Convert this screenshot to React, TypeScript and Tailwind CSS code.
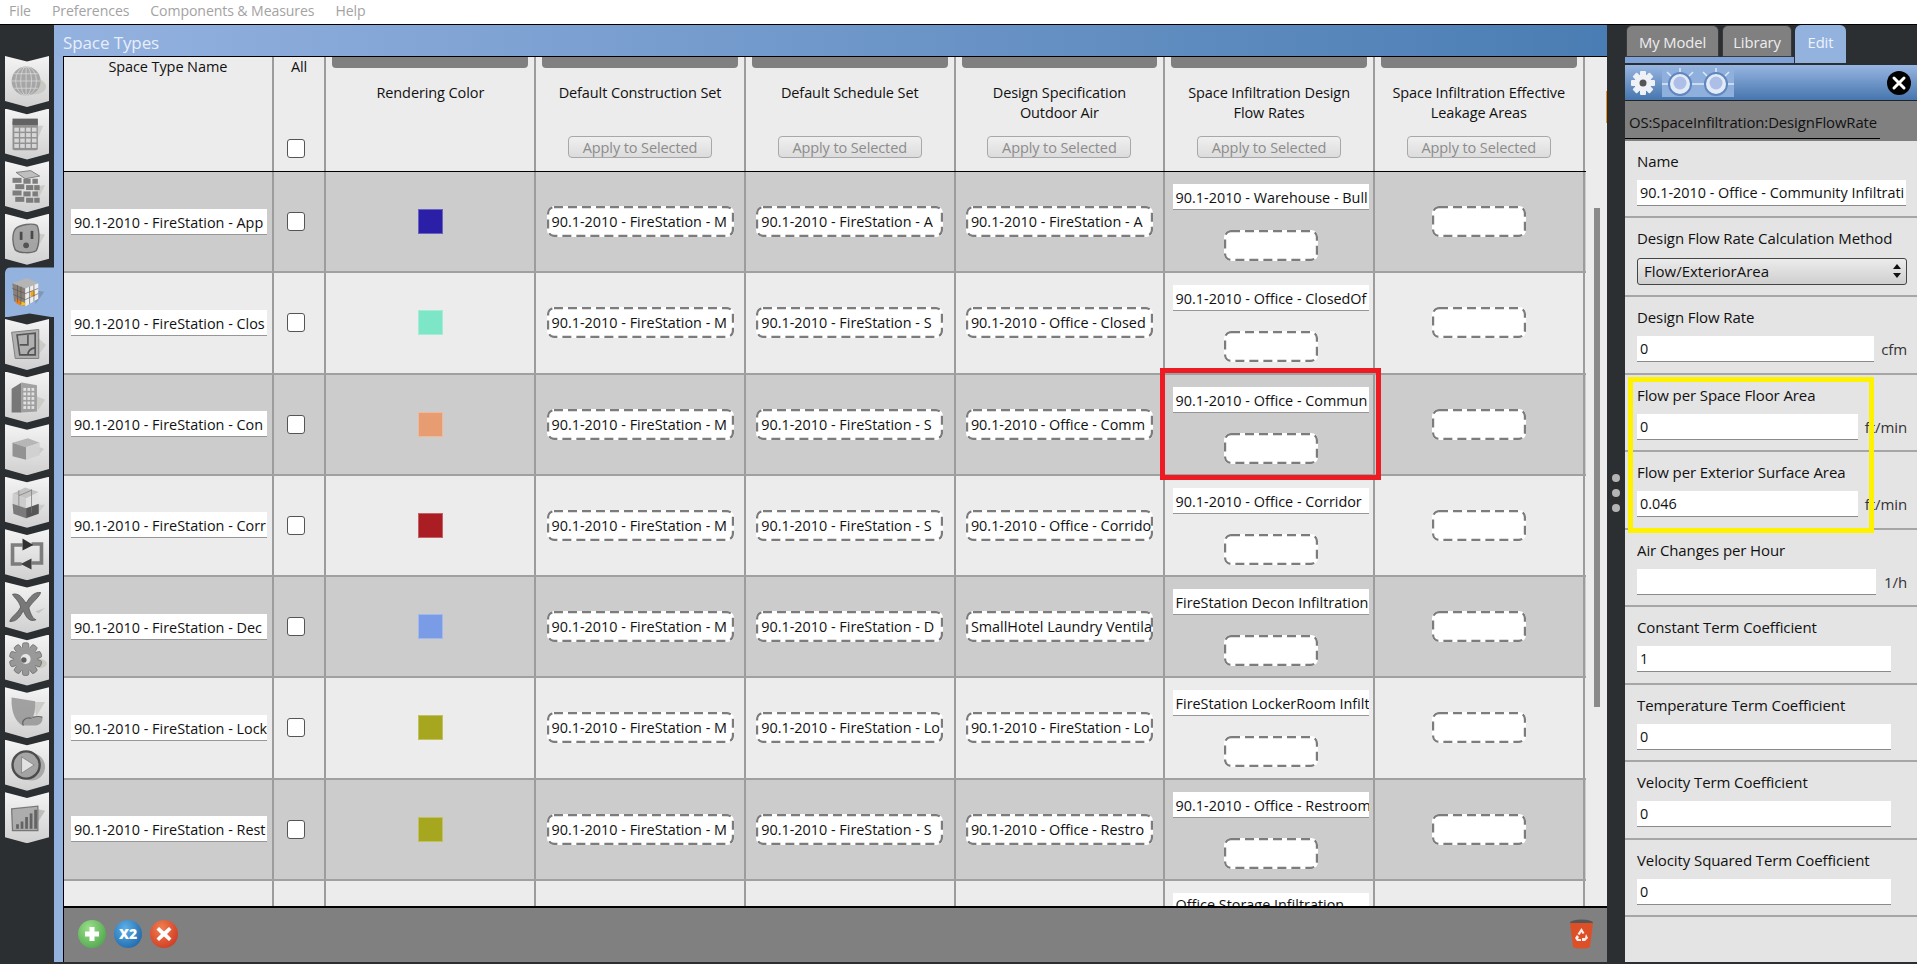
const rows = [
  { name: '90.1-2010 - FireStation - App', color: 'bg-[#2a1fa6]', sched: '90.1-2010 - FireStation - A', air: '90.1-2010 - FireStation - A', infil: '90.1-2010 - Warehouse - Bull' },
  { name: '90.1-2010 - FireStation - Clos', color: 'bg-[#7ce6c6]', sched: '90.1-2010 - FireStation - S', air: '90.1-2010 - Office - Closed', infil: '90.1-2010 - Office - ClosedOf' },
  { name: '90.1-2010 - FireStation - Con', color: 'bg-[#e89c72]', sched: '90.1-2010 - FireStation - S', air: '90.1-2010 - Office - Comm', infil: '90.1-2010 - Office - Commun' },
  { name: '90.1-2010 - FireStation - Corr', color: 'bg-[#aa1d22]', sched: '90.1-2010 - FireStation - S', air: '90.1-2010 - Office - Corrido', infil: '90.1-2010 - Office - Corridor' },
  { name: '90.1-2010 - FireStation - Dec', color: 'bg-[#7a9be6]', sched: '90.1-2010 - FireStation - D', air: 'SmallHotel Laundry Ventila', infil: 'FireStation Decon Infiltration' },
  { name: '90.1-2010 - FireStation - Lock', color: 'bg-[#a6a61f]', sched: '90.1-2010 - FireStation - Lo', air: '90.1-2010 - FireStation - Lo', infil: 'FireStation LockerRoom Infilt' },
  { name: '90.1-2010 - FireStation - Rest', color: 'bg-[#a6a61f]', sched: '90.1-2010 - FireStation - S', air: '90.1-2010 - Office - Restro', infil: '90.1-2010 - Office - Restroom' },
];

const headers = [
  'Rendering Color',
  'Default Construction Set',
  'Default Schedule Set',
  'Design Specification Outdoor Air',
  'Space Infiltration Design Flow Rates',
  'Space Infiltration Effective Leakage Areas',
];

function Globe() {
  return (
    <svg viewBox="0 0 44 42" className="h-full w-full">
      <ellipse cx="29" cy="27" rx="14" ry="9" fill="#c4c6c0" />
      <circle cx="21" cy="21" r="16" fill="#9c9c9c" />
      <g fill="none" stroke="#d0d0d0" strokeWidth="1">
        <ellipse cx="21" cy="21" rx="6" ry="16" />
        <ellipse cx="21" cy="21" rx="11.5" ry="16" />
        <path d="M21 5v32M5 21h32M8 13h26M8 29h26" />
      </g>
    </svg>
  );
}

function Calendar() {
  return (
    <svg viewBox="0 0 44 42" className="h-full w-full">
      <path d="M30 12l10 0-8 18z" fill="#c8c8c4" />
      <rect x="6" y="6" width="28" height="33" rx="2" fill="#858585" />
      <rect x="6" y="4" width="28" height="7" fill="#4c4c4c" />
      <g fill="#d6d6d6">
        {[14, 20, 26, 32].map((y) =>
          [8, 14.5, 21, 27.5].map((x) => <rect key={`${x}-${y}`} x={x} y={y} width="5" height="4.4" />),
        )}
      </g>
    </svg>
  );
}

function Bricks() {
  return (
    <svg viewBox="0 0 44 42" className="h-full w-full">
      <path d="M30 22l12-2-8 16z" fill="#c8c8c4" />
      <path d="M10 6l16-2 10 6-16 3z" fill="#b8b8b8" stroke="#666" strokeWidth="1" />
      {[12, 19, 26, 33].map((y, i) => (
        <g key={y} fill="#6c6c6c">
          <rect x={6 + (i % 2) * 3} y={y} width="10" height="5.5" />
          <rect x={18 + (i % 2) * 3} y={y + 1} width="8" height="5.5" />
          <rect x={28 + (i % 2) * 2} y={y + 1} width="6" height="5.5" />
        </g>
      ))}
    </svg>
  );
}

function Outlet() {
  return (
    <svg viewBox="0 0 44 42" className="h-full w-full">
      <path d="M30 14l12 2-10 18z" fill="#c8c8c4" />
      <path d="M9 10c5-5 19-7 24-4 3 5 3 22-1 28-5 3-18 3-23-1-3-6-4-17 0-23z" fill="#9a9a9a" stroke="#555" strokeWidth="1.5" />
      <rect x="14" y="13" width="3" height="9" fill="#2e2e2e" />
      <rect x="26" y="12" width="3" height="9" fill="#2e2e2e" />
      <circle cx="21" cy="28" r="3.2" fill="#3a3a3a" />
    </svg>
  );
}

function ColorCube() {
  return (
    <svg viewBox="0 0 44 42" className="h-full w-full">
      <path d="M30 20l12 2-10 14z" fill="#7f96ba" />
      <path d="M5 12l17-6 13 6-15 6z" fill="#b5b5b5" />
      <path d="M5 12l15 6v21L7 33z" fill="#8a8078" />
      <path d="M20 18l15-6v18l-15 9z" fill="#eeeeee" />
      <rect x="26" y="21" width="5" height="6" fill="#f2a51f" />
      <path d="M9 30l6 3v5l-6-3z" fill="#ee7c1a" />
      <path d="M15 33l5 2v3l-5-1z" fill="#f2c21f" />
      <path d="M20 24l15-6M20 31l15-7M25 16v20M30 14v19M5 18l15 6M6 25l14 6M11 14v20M15 16v20" stroke="#555" strokeWidth="0.7" />
    </svg>
  );
}

function FloorPlan() {
  return (
    <svg viewBox="0 0 44 42" className="h-full w-full">
      <path d="M34 14l9 8-9 12z" fill="#c8c8c4" />
      <path d="M5 8l30-3v32H9z" fill="#a8a8a8" stroke="#666" strokeWidth="1" />
      <path d="M11 11l20-2v24H14zM14 22h9V11M23 33c0-5 3-7 8-8" fill="none" stroke="#3c3c3c" strokeWidth="1.8" />
    </svg>
  );
}

function Building() {
  return (
    <svg viewBox="0 0 44 42" className="h-full w-full">
      <path d="M32 20l10 4-8 12z" fill="#c8c8c4" />
      <path d="M5 38V12l11-7v33z" fill="#666" />
      <path d="M16 5l17 3v29l-17 1z" fill="#959595" />
      <g fill="#e2e2e2">
        {[11, 16, 21, 26, 31].map((y) =>
          [18, 22.5, 27].map((x) => <rect key={`${x}-${y}`} x={x} y={y} width="3" height="3.2" />),
        )}
      </g>
    </svg>
  );
}

function Box() {
  return (
    <svg viewBox="0 0 44 42" className="h-full w-full">
      <path d="M33 18l8 3-8 8z" fill="#c8c8c4" />
      <path d="M6 14l17-5 13 5-15 5z" fill="#aeaeae" />
      <path d="M6 14l15 5v14L6 29z" fill="#858585" />
      <path d="M21 19l15-5v14l-15 5z" fill="#cfcfcf" />
    </svg>
  );
}

function BlockStack() {
  return (
    <svg viewBox="0 0 44 42" className="h-full w-full">
      <path d="M32 24l10 0-10 12z" fill="#c8c8c4" />
      <path d="M6 12l14-7 15 5-14 7z" fill="#bdbdbd" />
      <path d="M6 12l15 5v11L6 23z" fill="#c9c9c9" />
      <path d="M21 17l14-7v13l-14 5z" fill="#e2e2e2" />
      <path d="M6 23l15 5v11L7 34z" fill="#6a6a6a" />
      <path d="M21 28l14-5v11l-14 5z" fill="#3f3f3f" />
      <path d="M13 8v24M13 14l14-6M27 7v26" stroke="#666" strokeWidth="0.8" fill="none" />
    </svg>
  );
}

function Arrows() {
  return (
    <svg viewBox="0 0 44 42" className="h-full w-full">
      <path d="M17 11H6v21h10M27 31h11V10H27" fill="none" stroke="#6c6c6c" strokeWidth="4" />
      <path d="M17 4l12 7-12 6z" fill="#111" />
      <path d="M27 26l-12 6 12 6z" fill="#222" />
    </svg>
  );
}

function CrossTool() {
  return (
    <svg viewBox="0 0 44 42" className="h-full w-full">
      <path d="M6 7c7-2 11 4 15 10 4-7 9-13 16-12-1 5-10 11-13 17 2 7 5 13 8 13-7 3-11-2-14-10-4 7-7 12-15 12 1-5 9-9 12-16-2-7-7-10-9-14z" fill="#666" stroke="#444" strokeWidth="1" />
      <path d="M31 26l11-4-7 6z" fill="#c0c0bc" />
    </svg>
  );
}

function Gear() {
  const teeth = [0, 36, 72, 108, 144, 180, 216, 252, 288, 324];
  return (
    <svg viewBox="0 0 44 42" className="h-full w-full">
      <ellipse cx="36" cy="25" rx="8" ry="5" fill="#c4c8bc" />
      <g fill="#8c8c8c" stroke="#555" strokeWidth="0.8">
        {teeth.map((a) => (
          <rect key={a} x="17" y="2" width="7" height="9" rx="2" transform={`rotate(${a} 20.5 20)`} />
        ))}
      </g>
      <circle cx="20.5" cy="20" r="13" fill="#8c8c8c" />
      <circle cx="20.5" cy="20" r="5.5" fill="#e8e8e8" />
      <circle cx="18.5" cy="21" r="3" fill="#4a4a4a" />
    </svg>
  );
}

function Scroll() {
  return (
    <svg viewBox="0 0 44 42" className="h-full w-full">
      <path d="M30 10l12 0-10 16z" fill="#c8c8c4" />
      <path d="M5 5l26 4c0 7 0 14-3 18l11 0c1 5-3 9-9 9H17C10 32 4 22 5 5z" fill="#959595" />
      <path d="M18 36c-3-6 4-10 9-8M28 27c4-1 9-1 11 0" fill="none" stroke="#505050" strokeWidth="1.4" />
    </svg>
  );
}

function PlayIcon() {
  return (
    <svg viewBox="0 0 44 42" className="h-full w-full">
      <circle cx="27" cy="23" r="15" fill="#a0a09e" />
      <circle cx="21" cy="21" r="15" fill="#9a9a9a" stroke="#333" strokeWidth="2.6" />
      <path d="M16 12l14 9-14 9z" fill="#e2e2e2" stroke="#777" strokeWidth="1" />
    </svg>
  );
}

function ChartIcon() {
  return (
    <svg viewBox="0 0 44 42" className="h-full w-full">
      <path d="M32 12l10 2-10 16z" fill="#b8b8b4" />
      <path d="M5 12l29-3v27H6z" fill="#a4a4a4" stroke="#666" strokeWidth="1.4" />
      <g fill="#4e4e4e">
        <rect x="10" y="29" width="3" height="5" />
        <rect x="15" y="26" width="3" height="8" />
        <rect x="20" y="21" width="3" height="13" />
        <rect x="25" y="17" width="3" height="17" />
        <rect x="30" y="13" width="3" height="21" />
      </g>
    </svg>
  );
}

const sideIcons = [Globe, Calendar, Bricks, Outlet, ColorCube, FloorPlan, Building, Box, BlockStack, Arrows, CrossTool, Gear, Scroll, PlayIcon, ChartIcon];

function Sidebar() {
  return (
    <div className="flex w-[54px] flex-none flex-col pt-[31px]">
      {sideIcons.map((Icon, i) =>
        i === 4 ? (
          <div key={i} className="ml-[5px] h-[52.6px] w-[49px] flex-none pt-[1px]">
            <div className="h-[50px] rounded-tl-[6px] bg-[#94b2de] pl-[3px] pr-[8px] pt-[5px] [clip-path:polygon(0_0,100%_0,100%_100%,50%_92%,0_100%)]">
              <div className="h-[38px]"><Icon /></div>
            </div>
          </div>
        ) : (
          <div key={i} className="ml-[5px] h-[52.6px] w-[44px] flex-none">
            <div className="h-[51px] bg-linear-to-b from-[#f4f4f4] to-[#d0d0d0] px-[1px] pt-[6px] [clip-path:polygon(0_0,50%_11%,100%_0,100%_88%,50%_100%,0_88%)]">
              <div className="h-[38px] opacity-85"><Icon /></div>
            </div>
          </div>
        ),
      )}
    </div>
  );
}

function NameInput({ value }: { value: string }) {
  return (
    <div className="h-[26px] w-[196px] overflow-hidden whitespace-nowrap border-b-[1.5px] border-[#969696] bg-white pl-[3px] pr-[1px] text-[14.4px] leading-[27px] tracking-[0px]">
      {value}
    </div>
  );
}

function DropBox({ value, wide = true }: { value?: string; wide?: boolean }) {
  return (
    <div className={`relative h-[31px] ${wide ? 'w-[187px]' : 'w-[94px]'} overflow-hidden whitespace-nowrap rounded-[7px] bg-white px-[5px] text-[14.4px] leading-[32px] tracking-[0px]`}>
      {value}
      <svg className="absolute inset-0 h-full w-full">
        <rect x="1" y="1" width={wide ? 185 : 92} height="29" rx="6" fill="none" stroke="#7c7c7c" strokeWidth="2.4" strokeDasharray="9 5" />
      </svg>
    </div>
  );
}

function CheckBox() {
  return <input type="checkbox" className="h-[19px] w-[18px] appearance-none rounded-[3px] border-[1.5px] border-[#555] bg-white" />;
}

function HeaderRow() {
  return (
    <div className="flex h-[115px] flex-none border-b border-black bg-[#ececec]">
      <div className="w-[209.7px] flex-none border-r-2 border-[#9c9c9c] text-center leading-[20px]">Space Type Name</div>
      <div className="flex w-[52.8px] flex-none flex-col border-r-2 border-[#9c9c9c] text-center leading-[20px]">
        All
        <div className="mt-auto mb-[13px] ml-[13px] flex"><CheckBox /></div>
      </div>
      {headers.map((h, i) => (
        <div key={h} className="flex w-[209.7px] flex-none flex-col items-center border-r-2 border-[#9c9c9c] px-[6px]">
          <div className="h-[11px] w-full flex-none rounded-b-[4px] bg-[#808080]" />
          <div className="mt-[15px] w-[190px] text-center leading-[20px]">{h}</div>
          {i > 0 && (
            <button className="mt-auto mb-[13px] h-[22px] w-[144px] rounded-[4px] border border-[#a8a8a8] bg-linear-to-b from-[#f0f0f0] to-[#dcdcdc] leading-[19px] text-[#8c8c8c]">
              Apply to Selected
            </button>
          )}
        </div>
      ))}
    </div>
  );
}

function Row({ r, alt }: { r: (typeof rows)[number]; alt: boolean }) {
  return (
    <div className={`flex h-[101.25px] flex-none border-b-2 border-[#a0a0a0] ${alt ? 'bg-[#ececec]' : 'bg-[#cccccc]'}`}>
      <div className="flex w-[209.7px] flex-none items-center border-r-2 border-[#9c9c9c] pl-[7px]">
        <NameInput value={r.name} />
      </div>
      <div className="flex w-[52.8px] flex-none items-center border-r-2 border-[#9c9c9c] pl-[13px]">
        <CheckBox />
      </div>
      <div className="flex w-[209.7px] flex-none items-center justify-center border-r-2 border-[#9c9c9c]">
        <div className={`h-[25px] w-[25px] border border-white/30 ${r.color}`} />
      </div>
      <div className="flex w-[209.7px] flex-none items-center justify-center border-r-2 border-[#9c9c9c]">
        <DropBox value="90.1-2010 - FireStation - M" />
      </div>
      <div className="flex w-[209.7px] flex-none items-center justify-center border-r-2 border-[#9c9c9c]">
        <DropBox value={r.sched} />
      </div>
      <div className="flex w-[209.7px] flex-none items-center justify-center border-r-2 border-[#9c9c9c]">
        <DropBox value={r.air} />
      </div>
      <div className="flex w-[209.7px] flex-none flex-col items-center gap-[20px] border-r-2 border-[#9c9c9c] pl-[3px] pt-[12px]">
        <NameInput value={r.infil} />
        <DropBox wide={false} />
      </div>
      <div className="flex w-[209.7px] flex-none items-center justify-center border-r-2 border-[#9c9c9c]">
        <DropBox wide={false} />
      </div>
    </div>
  );
}

function LastRow() {
  return (
    <div className="flex h-[27px] flex-none overflow-hidden bg-[#ececec]">
      <div className="w-[209.7px] flex-none border-r-2 border-[#9c9c9c]" />
      <div className="w-[52.8px] flex-none border-r-2 border-[#9c9c9c]" />
      <div className="w-[209.7px] flex-none border-r-2 border-[#9c9c9c]" />
      <div className="w-[209.7px] flex-none border-r-2 border-[#9c9c9c]" />
      <div className="w-[209.7px] flex-none border-r-2 border-[#9c9c9c]" />
      <div className="w-[209.7px] flex-none border-r-2 border-[#9c9c9c]" />
      <div className="flex w-[209.7px] flex-none flex-col items-center border-r-2 border-[#9c9c9c] pl-[3px] pt-[12px]">
        <div className="h-[15px] w-[196px] overflow-hidden whitespace-nowrap bg-white pl-[3px] text-[14.4px] leading-[24px] tracking-[0px]">Office Storage Infiltration</div>
      </div>
      <div className="w-[209.7px] flex-none border-r-2 border-[#9c9c9c]" />
    </div>
  );
}

function RoundButton({ tone, children }: { tone: string; children: React.ReactNode }) {
  return (
    <div className={`flex h-[28px] w-[28px] items-center justify-center rounded-full bg-radial-[at_40%_30%] ${tone}`}>
      {children}
    </div>
  );
}

function Trash() {
  return (
    <svg viewBox="0 0 25 30" className="h-[30px] w-[25px]">
      <ellipse cx="12.5" cy="3.5" rx="11.5" ry="3" fill="#555" />
      <path d="M1 4h23l-3 24c-3 2-14 2-17 0z" fill="#dd5027" />
      <path d="M12.5 9l3 5-2 1-1-2-2 3-2-1zM17 15l2 4-3 3h-3v-3l3 0zM8 16l2 2-1 2h3v2H8l-2-3z" fill="#ffffff" opacity="0.9" />
    </svg>
  );
}

function CenterPane() {
  return (
    <div className="flex w-[1553px] flex-none flex-col bg-[#94b2de]">
      <div className="h-[31px] flex-none bg-linear-to-r from-[#94b2e0] to-[#4a7db3] pl-[9px] pt-[6px] text-[17px] leading-[24px] text-[#e8eef8]">
        Space Types
      </div>
      <div className="ml-[9px] flex min-h-0 flex-1 flex-col border-t border-l border-black">
        <div className="flex min-h-0 flex-1">
          <div className="flex w-[1521.5px] flex-none flex-col overflow-hidden">
            <HeaderRow />
            {rows.map((r, i) => (
              <Row key={r.name} r={r} alt={i % 2 === 1} />
            ))}
            <LastRow />
          </div>
          <div className="flex-1 bg-[#ececec] pl-[8px] pt-[151px]">
            <div className="h-[499px] w-[6px] bg-[#8a8a8a]" />
          </div>
          <div className="w-px flex-none bg-[#ececec]">
            <div className="mt-[34px] h-[32px] bg-[#f0961e]" />
          </div>
        </div>
        <div className="flex h-[56px] flex-none items-center gap-[8px] border-t-2 border-black bg-[#808080] pb-[2px] pl-[14px] pr-[13px]">
          <RoundButton tone="from-[#9be08a] to-[#3f9a3f]">
            <svg viewBox="0 0 20 20" className="h-[20px] w-[20px]"><path d="M7.5 3h5v4.5H17v5h-4.5V17h-5v-4.5H3v-5h4.5z" fill="#fff" /></svg>
          </RoundButton>
          <RoundButton tone="from-[#5cb0e8] to-[#12589c]">
            <span className="text-[14px] font-extrabold leading-none text-white">X2</span>
          </RoundButton>
          <RoundButton tone="from-[#f08050] to-[#c82a18]">
            <svg viewBox="0 0 20 20" className="h-[20px] w-[20px]"><path d="M5 3l5 4.5L15 3l2.5 2.5L13 10l4.5 4.5L15 17l-5-4.5L5 17l-2.5-2.5L7 10 2.5 5.5z" fill="#fff" /></svg>
          </RoundButton>
          <div className="ml-auto"><Trash /></div>
        </div>
      </div>
    </div>
  );
}

function Splitter() {
  return (
    <div className="flex w-[18px] flex-none flex-col items-center gap-[7px] pr-[1px] pt-[449px]">
      <div className="h-[8px] w-[8px] rounded-full bg-[#b4b4b4]" />
      <div className="h-[8px] w-[8px] rounded-full bg-[#b4b4b4]" />
      <div className="h-[8px] w-[8px] rounded-full bg-[#b4b4b4]" />
    </div>
  );
}

function Section({ label, value, inputW, unit, h = 'h-[77.5px]' }: { label: string; value: string; inputW: string; unit?: string; h?: string }) {
  return (
    <div className={`${h} flex-none border-b-2 border-[#a6a6a6] pl-[12px] pt-[10px]`}>
      <div className="h-[20px] text-[15px] leading-[20px]">{label}</div>
      <div className="mt-[9px] flex">
        <div className={`h-[26px] ${inputW} flex-none overflow-hidden whitespace-nowrap border-b-[1.5px] border-[#8a8a8a] bg-white pl-[3px] text-[14.4px] leading-[26px] tracking-[0px]`}>{value}</div>
        {unit && <span className="ml-auto pr-[10px] text-[15px] leading-[26px] text-[#333]">{unit}</span>}
      </div>
    </div>
  );
}

function Sun() {
  return (
    <svg viewBox="0 0 36 30" className="h-[30px] w-[36px]">
      <path d="M18 0v6M5 4l5 5M31 4l-5 5M0 16h6M30 16h6" stroke="#dfe8f6" strokeWidth="1.5" />
      <circle cx="18" cy="16" r="11" fill="#e4ebf8" stroke="#5f86bd" strokeWidth="2" />
      <circle cx="18" cy="15" r="6.5" fill="#adbfe6" />
    </svg>
  );
}

function RightPanel() {
  return (
    <div className="flex w-[292px] flex-none flex-col">
      <div className="relative flex h-[38px] flex-none items-start gap-[3px] pl-[1px] text-[14.8px] leading-[32px]">
        <div className="h-[32px] w-[93px] rounded-t-[6px] border border-[#3a3a3a] bg-[#808080] text-center text-[#eeeeee]">My Model</div>
        <div className="h-[32px] w-[70px] rounded-t-[6px] border border-[#3a3a3a] bg-[#808080] text-center text-[#eeeeee]">Library</div>
        <div className="h-[38px] w-[51px] rounded-t-[6px] bg-[#94b2de] pt-[1px] text-center text-[#eef3fb]">Edit</div>
        <div className="absolute bottom-0 left-0 h-[6px] w-[169px] bg-[#7fa2d8]" />
      </div>
      <div className="mt-[2px] flex h-[36px] flex-none items-center border-b border-[#20242a] bg-linear-to-b from-[#98b6e2] to-[#4676ad] pl-[5px] pr-[6px]">
        <svg viewBox="0 0 26 26" className="h-[26px] w-[26px]">
          <g fill="#eef1f6">
            {[0, 45, 90, 135].map((a) => (
              <rect key={a} x="10" y="1" width="6" height="24" rx="1" transform={`rotate(${a} 13 13)`} />
            ))}
          </g>
          <circle cx="13" cy="13" r="8.5" fill="#eef1f6" />
          <circle cx="13" cy="13" r="3.5" fill="#555" />
        </svg>
        <div className="ml-[6px] flex h-[28px] w-[72px] items-center bg-[#8fb0dd]">
          <Sun />
          <Sun />
        </div>
        <div className="ml-auto flex h-[24px] w-[24px] items-center justify-center rounded-full bg-black">
          <svg viewBox="0 0 16 16" className="h-[16px] w-[16px]"><path d="M3 3l10 10M13 3L3 13" stroke="#fff" strokeWidth="3" strokeLinecap="round" /></svg>
        </div>
      </div>
      <div className="h-[40px] flex-none bg-[#808080]">
        <div className="h-[38px] w-[255px] whitespace-nowrap border-b border-black pl-[4px] pt-[10px] text-[14.9px] leading-[22px] text-[#111]">OS:SpaceInfiltration:DesignFlowRate</div>
      </div>
      <div className="flex min-h-0 flex-1 flex-col bg-[#e4e4e4]">
        <Section label="Name" value="90.1-2010 - Office - Community Infiltrati" inputW="w-[269px]" h="h-[76.5px]" />
        <div className="h-[79.5px] flex-none border-b-2 border-[#a6a6a6] pl-[12px] pt-[10px]">
          <div className="h-[20px] text-[15px] leading-[20px]">Design Flow Rate Calculation Method</div>
          <div className="mt-[10px] flex h-[27px] w-[270px] items-center justify-between rounded-[3px] border border-[#444] bg-linear-to-b from-[#ececec] to-[#cfcfcf] pl-[6px] pr-[4px] text-[15px] tracking-[0px]">
            <span>Flow/ExteriorArea</span>
            <svg viewBox="0 0 10 16" className="h-[16px] w-[10px]"><path d="M5 1l4 5H1zM5 15l4-5H1z" fill="#111" /></svg>
          </div>
        </div>
        <Section label="Design Flow Rate" value="0" inputW="w-[237px]" unit="cfm" />
        <Section label="Flow per Space Floor Area" value="0" inputW="w-[221px]" unit="ft/min" />
        <Section label="Flow per Exterior Surface Area" value="0.046" inputW="w-[221px]" unit="ft/min" />
        <Section label="Air Changes per Hour" value="" inputW="w-[239px]" unit="1/h" />
        <Section label="Constant Term Coefficient" value="1" inputW="w-[254px]" />
        <Section label="Temperature Term Coefficient" value="0" inputW="w-[254px]" />
        <Section label="Velocity Term Coefficient" value="0" inputW="w-[254px]" />
        <Section label="Velocity Squared Term Coefficient" value="0" inputW="w-[254px]" />
      </div>
    </div>
  );
}

export default function App() {
  return (
    <div className="relative flex h-[964px] w-[1917px] flex-col overflow-hidden bg-[#2b2f32] font-['Open_Sans','Noto_Sans',sans-serif] text-[14.5px] tracking-[-0.1px] text-[#111]">
      <div className="flex h-[25px] flex-none gap-[21px] border-b border-black bg-white pl-[9px] text-[14.1px] leading-[21px] text-[#a3a3a3]">
        <span>File</span>
        <span>Preferences</span>
        <span>Components &amp; Measures</span>
        <span>Help</span>
      </div>
      <div className="flex h-[937px] flex-none">
        <Sidebar />
        <CenterPane />
        <Splitter />
        <RightPanel />
      </div>
      {/* annotation boxes drawn over the screenshot */}
      <div className="absolute left-[1160px] top-[368px] h-[112px] w-[221px] border-[5px] border-[#ed1c24]" />
      <div className="absolute left-[1628px] top-[377px] h-[156px] w-[246px] border-[5px] border-[#fff200]" />
    </div>
  );
}
